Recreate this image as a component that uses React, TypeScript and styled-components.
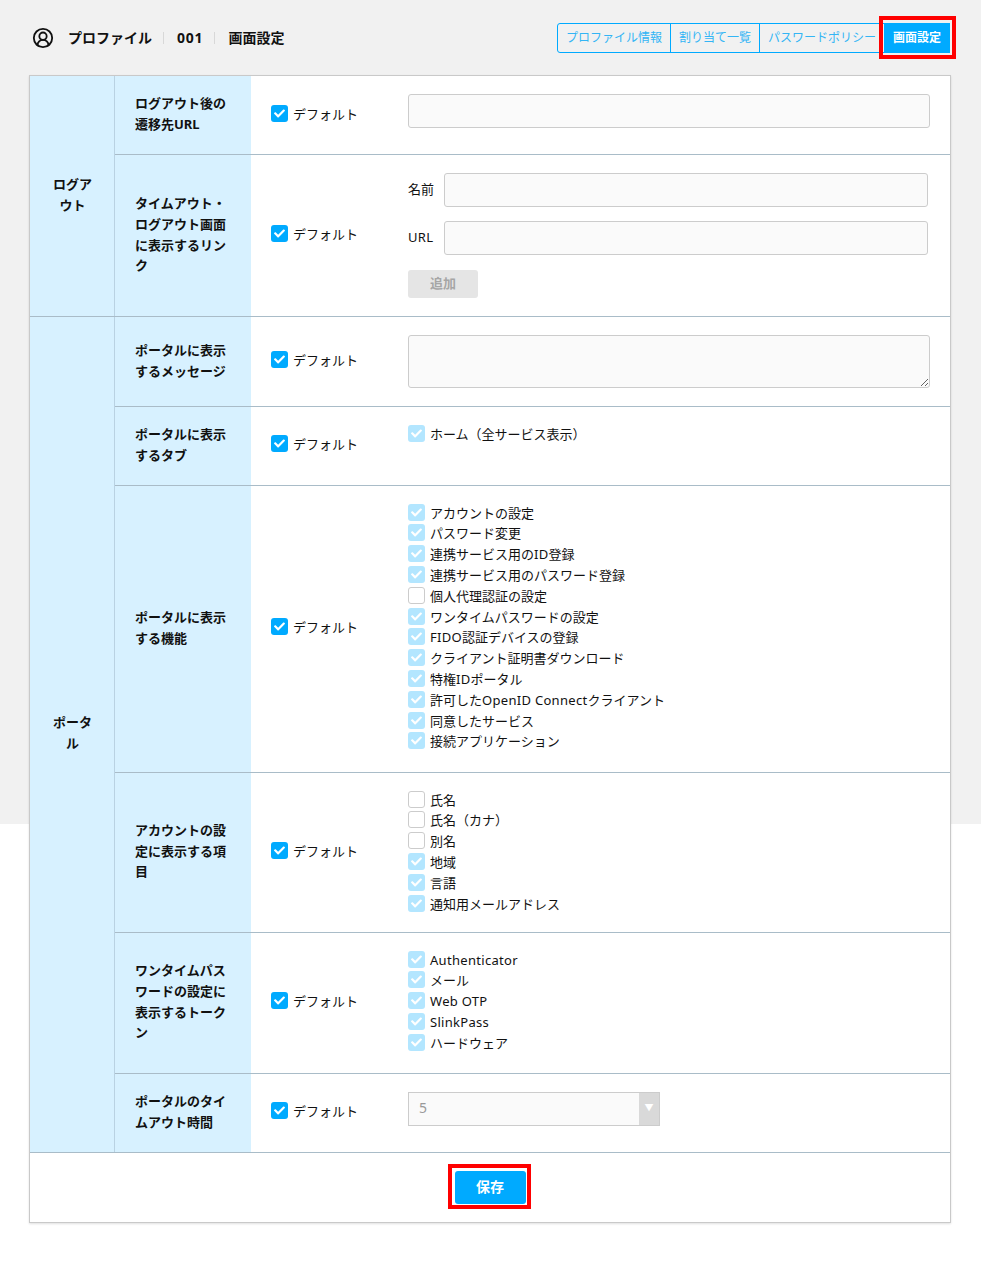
import React from "react";
import styled, { createGlobalStyle } from "styled-components";
import { CircleUserRound } from "lucide-react";
import { FaCheck } from "react-icons/fa";

const Global = createGlobalStyle`
  html, body { margin: 0; padding: 0; background: #fff; }
  body { font-family: "Noto Sans", "Noto Sans CJK JP", sans-serif; color: #111; }
  * { box-sizing: border-box; }
`;

const Page = styled.div`
  width: 981px;
  padding: 23px 30px 40px 29px;
  background: linear-gradient(#f1f1f1 824px, #fff 824px);
`;

const Header = styled.header`
  display: flex;
  align-items: center;
  justify-content: space-between;
  height: 30px;
  margin-bottom: 22px;
  padding-left: 3px;
`;

const Crumbs = styled.div`
  display: flex;
  align-items: center;
  font-size: 14px;
  font-weight: 700;
  line-height: 30px;
`;

const TitleIcon = styled(CircleUserRound)`
  margin-right: 14px;
  color: #111;
`;

const Crumb = styled.span`
  &:not(:last-child) {
    margin-right: 13px;
    padding-right: 12px;
    background: linear-gradient(#d8d8d8, #d8d8d8) right center / 1px 12px no-repeat;
  }
`;

const NumberCrumb = styled(Crumb)`
  letter-spacing: 0.8px;
`;

const Nav = styled.nav`
  position: relative;
  display: flex;
  margin-right: 1px;
`;

const NavItem = styled.div<{ $active?: boolean }>`
  height: 30px;
  padding: 0 8px;
  border: 1px solid #00aaff;
  margin-left: -1px;
  font-size: 12px;
  line-height: 28px;
  color: ${(p) => (p.$active ? "#fff" : "#33b5f5")};
  background: ${(p) => (p.$active ? "#00aaff" : "transparent")};
  font-weight: ${(p) => (p.$active ? 700 : 400)};
  &:first-child { border-radius: 3px 0 0 3px; }
  &:last-child { border-radius: 0 3px 3px 0; padding: 0 9px; }
`;

const Highlight = styled.span`
  position: absolute;
  border: 4px solid #f00;
  pointer-events: none;
`;

const NavHighlight = styled(Highlight)`
  top: -7px;
  right: -6px;
  width: 77px;
  height: 43px;
`;

const Card = styled.main`
  background: #fff;
  border: 1px solid #c9c9c9;
  box-shadow: 0 1px 2px rgba(0, 0, 0, 0.12);
`;

const Group = styled.section`
  display: flex;
  border-bottom: 1px solid #a9bcc8;
`;

const GroupLabel = styled.div`
  flex: 0 0 85px;
  display: flex;
  align-items: center;
  padding: 0 22px 3px 23px;
  background: #d7f1ff;
  border-right: 1px solid #b9d2e2;
  font-size: 13px;
  font-weight: 700;
  line-height: 20.8px;
  text-align: center;
`;

const Rows = styled.div`
  flex: 1;
  min-width: 0;
`;

const Row = styled.div`
  display: flex;
  &:not(:last-child) { border-bottom: 1px solid #a9bcc8; }
`;

const RowLabel = styled.div`
  flex: 0 0 136px;
  padding: 0 20px 2px;
  align-self: stretch;
  display: flex;
  align-items: center;
  background: #d7f1ff;
  font-size: 13px;
  font-weight: 700;
  line-height: 20.8px;
`;

const Latin = styled.span`
  letter-spacing: 0.3px;
`;

const DefaultCell = styled.div`
  flex: 0 0 157px;
  display: flex;
  align-items: center;
  padding-left: 20px;
`;

const Content = styled.div<{ $bottom: number }>`
  flex: 1;
  min-width: 0;
  padding: 18px 20px ${(p) => p.$bottom}px 0;
`;

const Check = styled.label`
  display: flex;
  align-items: flex-start;
  gap: 5px;
  min-height: 20.8px;
  font-size: 13px;
  line-height: 20.8px;
`;

const CheckText = styled.span`
  margin-top: -1px;
`;

const Box = styled.span<{ $checked: boolean; $disabled?: boolean }>`
  flex: none;
  width: 17px;
  height: 17px;
  display: flex;
  align-items: center;
  justify-content: center;
  border-radius: 3px;
  color: #fff;
  border: ${(p) => (p.$checked ? "none" : "1px solid #ccc")};
  background: ${(p) => (!p.$checked ? "#fff" : p.$disabled ? "#b3e6ff" : "#00aaff")};
`;

const CheckBox = ({ label, checked = true, disabled }: { label: React.ReactNode; checked?: boolean; disabled?: boolean }) => (
  <Check>
    <Box $checked={checked} $disabled={disabled}>{checked && <FaCheck size={11} />}</Box>
    <CheckText>{label}</CheckText>
  </Check>
);

const TextInput = styled.input`
  display: block;
  flex: 1;
  min-width: 0;
  height: 34px;
  border: 1px solid #ccc;
  border-radius: 3px;
  background: #fafafa;
  outline: none;
`;

const WideInput = styled(TextInput)`
  width: 100%;
  margin-bottom: 8px;
`;

const TextArea = styled.textarea`
  display: block;
  width: 100%;
  height: 53px;
  border: 1px solid #ccc;
  border-radius: 3px;
  background: #fafafa;
  outline: none;
`;

const FieldRow = styled.div`
  display: flex;
  align-items: center;
  gap: 10px;
  margin-right: 2px;
  margin-bottom: 15px;
  font-size: 13px;
  &:first-child { margin-bottom: 14px; }
`;

const FieldName = styled.span`
  flex: 0 0 26px;
  margin-top: -3px;
`;

const AddButton = styled.button`
  display: block;
  width: 70px;
  height: 28px;
  padding: 0 0 4px;
  border: none;
  border-radius: 3px;
  background: #e5e5e5;
  color: #a6a6a6;
  font: 700 13px "Noto Sans", "Noto Sans CJK JP", sans-serif;
`;

const Select = styled.div`
  display: flex;
  width: 252px;
  height: 34px;
  margin-bottom: 8px;
  border: 1px solid #ccc;
  background: #fafafa;
  font-size: 14px;
  line-height: 30px;
  color: #999;
`;

const SelectValue = styled.span`
  flex: 1;
  padding-left: 10px;
`;

const SelectArrow = styled.span`
  flex: 0 0 20px;
  background: #d9d9d9;
  color: #fff;
  font-size: 9px;
  text-align: center;
`;

const TabSpacer = styled.div`
  height: 20.8px;
`;

const Footer = styled.footer`
  display: flex;
  justify-content: center;
  padding: 18px 0;
`;

const SaveWrap = styled.div`
  position: relative;
`;

const SaveButton = styled.button`
  display: block;
  width: 71px;
  height: 33px;
  padding: 0 0 3px;
  border: none;
  border-radius: 3px;
  background: #00aaff;
  color: #fff;
  font: 700 14px "Noto Sans", "Noto Sans CJK JP", sans-serif;
`;

const SaveHighlight = styled(Highlight)`
  top: -7px;
  left: -7px;
  width: 83px;
  height: 45px;
`;

const List = ({ items }: { items: [React.ReactNode, boolean?][] }) => (
  <>
    {items.map(([label, checked = true], i) => (
      <CheckBox key={i} label={label} checked={checked} disabled />
    ))}
  </>
);

const Setting = ({ label, bottom = 18, children }: { label: string; bottom?: number; children: React.ReactNode }) => (
  <Row>
    <RowLabel>{label}</RowLabel>
    <DefaultCell><CheckBox label="デフォルト" /></DefaultCell>
    <Content $bottom={bottom}>{children}</Content>
  </Row>
);

export default function App() {
  return (
    <Page>
      <Global />
      <Header>
        <Crumbs>
          <TitleIcon size={22} strokeWidth={2} />
          <Crumb>プロファイル</Crumb>
          <NumberCrumb>001</NumberCrumb>
          <Crumb>画面設定</Crumb>
        </Crumbs>
        <Nav>
          <NavItem>プロファイル情報</NavItem>
          <NavItem>割り当て一覧</NavItem>
          <NavItem>パスワードポリシー</NavItem>
          <NavItem $active>画面設定</NavItem>
          <NavHighlight />
        </Nav>
      </Header>
      <Card>
        <Group>
          <GroupLabel>ログアウト</GroupLabel>
          <Rows>
            <Setting label="ログアウト後の遷移先URL">
              <WideInput disabled />
            </Setting>
            <Setting label="タイムアウト・ログアウト画面に表示するリンク">
              <FieldRow><FieldName>名前</FieldName><TextInput disabled /></FieldRow>
              <FieldRow><FieldName><Latin>URL</Latin></FieldName><TextInput disabled /></FieldRow>
              <AddButton disabled>追加</AddButton>
            </Setting>
          </Rows>
        </Group>
        <Group>
          <GroupLabel>ポータル</GroupLabel>
          <Rows>
            <Setting label="ポータルに表示するメッセージ">
              <TextArea disabled />
            </Setting>
            <Setting label="ポータルに表示するタブ">
              <CheckBox label="ホーム（全サービス表示）" disabled />
              <TabSpacer />
            </Setting>
            <Setting label="ポータルに表示する機能" bottom={18.4}>
              <List items={[
                ["アカウントの設定"], ["パスワード変更"], [<>連携サービス用の<Latin>ID</Latin>登録</>],
                ["連携サービス用のパスワード登録"], ["個人代理認証の設定", false],
                ["ワンタイムパスワードの設定"], [<><Latin>FIDO</Latin>認証デバイスの登録</>],
                ["クライアント証明書ダウンロード"], [<>特権<Latin>ID</Latin>ポータル</>],
                [<>許可した<Latin>OpenID Connect</Latin>クライアント</>], ["同意したサービス"], ["接続アプリケーション"],
              ]} />
            </Setting>
            <Setting label="アカウントの設定に表示する項目" bottom={16.2}>
              <List items={[
                ["氏名", false], ["氏名（カナ）", false], ["別名", false],
                ["地域"], ["言語"], ["通知用メールアドレス"],
              ]} />
            </Setting>
            <Setting label="ワンタイムパスワードの設定に表示するトークン">
              <List items={[
                [<Latin>Authenticator</Latin>], ["メール"], [<Latin>Web OTP</Latin>],
                [<Latin>SlinkPass</Latin>], ["ハードウェア"],
              ]} />
            </Setting>
            <Setting label="ポータルのタイムアウト時間">
              <Select>
                <SelectValue>5</SelectValue>
                <SelectArrow>▼</SelectArrow>
              </Select>
            </Setting>
          </Rows>
        </Group>
        <Footer>
          <SaveWrap>
            <SaveButton>保存</SaveButton>
            <SaveHighlight />
          </SaveWrap>
        </Footer>
      </Card>
    </Page>
  );
}
